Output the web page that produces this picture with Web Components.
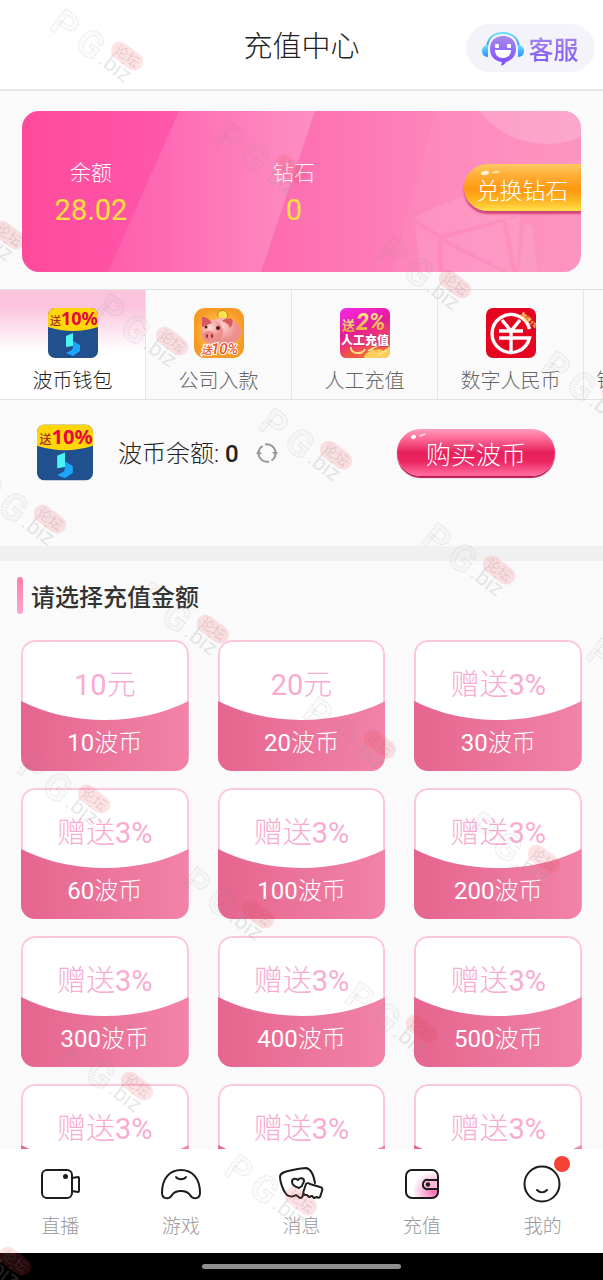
<!DOCTYPE html>
<html lang="zh-CN">
<head>
<meta charset="utf-8">
<meta name="viewport" content="width=device-width, initial-scale=1">
<title>充值中心</title>
<style>
  body {
    margin: 0;
    background: #fafafa;
    font-family: Roboto, "Noto Sans CJK SC", sans-serif;
    font-weight: 300;
    color: #333;
  }
</style>
</head>
<body>
<recharge-page></recharge-page>

<script>
// Icons, keyed by name
const ICONS = {
  service: `<svg viewBox="0 0 42 36">
    <defs>
      <linearGradient id="b" x1="0" y1="0" x2="0" y2="1"><stop offset="0" stop-color="#6be0fb"/><stop offset="1" stop-color="#2f8dfb"/></linearGradient>
      <linearGradient id="f" x1="0" y1="0" x2="0" y2="1"><stop offset="0" stop-color="#a78be8"/><stop offset="1" stop-color="#7c4bff"/></linearGradient>
    </defs>
    <path d="M5 17C6 7 13 3 21 3s15 4 16 14" fill="none" stroke="url(#b)" stroke-width="2"/>
    <path d="M6 15v12C2 27 0 24 0 21s2-6 6-6zM36 15v12c4 0 6-3 6-6s-2-6-6-6z" fill="url(#b)"/>
    <path d="M21 6c8 0 13 5 13 13 0 7-4 11-10 13-1 2-3 3-5 4l1-4C12 31 8 26 8 19 8 11 13 6 21 6z" fill="url(#f)"/>
    <rect x="13" y="14" width="4" height="4" rx="1" fill="#fff"/><rect x="25" y="14" width="4" height="4" rx="1" fill="#fff"/>
    <path d="M13 20h16c0 5-3 8-8 8s-8-3-8-8z" fill="#fff"/></svg>`,
  wallet: `<svg viewBox="0 0 50 50">
    <defs><clipPath id="r"><rect width="50" height="50" rx="7"/></clipPath></defs>
    <g clip-path="url(#r)"><rect width="50" height="50" fill="#21508f"/><path d="M0 0h50v19Q25 27 0 19z" fill="#ffd60a"/></g>
    <text x="2" y="17" font-size="11" font-weight="500" fill="#a3341a">送</text>
    <text x="13" y="17" font-family="Noto Sans, sans-serif" font-size="18" font-weight="700" fill="#e5083f">10%</text>
    <path d="M18 28l7-3v13l-7 1z" fill="#4bf3f2"/><path d="M25 33l7 4v6l-7 5-7-3 6-3 1-3z" fill="#1ba6fb"/></svg>`,
  pig: `<svg viewBox="0 0 50 50">
    <defs><radialGradient id="o"><stop offset="0" stop-color="#ffdf6a"/><stop offset="1" stop-color="#f79a25"/></radialGradient>
    <radialGradient id="p" cx=".4" cy=".3"><stop offset="0" stop-color="#ffdcd4"/><stop offset="1" stop-color="#ed8f8c"/></radialGradient></defs>
    <rect width="50" height="50" rx="11" fill="url(#o)"/>
    <path d="M24 9a5 5 0 1 1 8 2" fill="#ffe04c" stroke="#b7820e"/>
    <ellipse cx="29" cy="24" rx="18" ry="14" fill="url(#p)"/>
    <ellipse cx="18" cy="24" rx="11" ry="12" fill="url(#p)"/>
    <path d="M8 19l0-10c5 0 8 3 10 6zM28 13c3 1 7 3 8 7 3-3 3-7 2-9-4-1-8 0-10 2z" fill="#d9575e"/>
    <ellipse cx="15" cy="28" rx="6" ry="5" fill="#f08a86"/>
    <ellipse cx="13" cy="28" rx="1" ry="2" fill="#842b2b"/><ellipse cx="18" cy="28" rx="1" ry="2" fill="#842b2b"/>
    <circle cx="12" cy="19" r="1.5" fill="#472020"/><circle cx="24" cy="20" r="2" fill="#472020"/>
    <g fill="#e8542b" stroke="#fff" stroke-width="2" paint-order="stroke" font-weight="500" font-style="italic">
      <text x="7" y="46" font-size="11">送</text><text x="17" y="46" font-size="15">10%</text></g></svg>`,
  manual: `<svg viewBox="0 0 50 50">
    <defs><linearGradient id="m" x1="0" y1="0" x2=".4" y2="1"><stop offset="0" stop-color="#f32be8"/><stop offset=".5" stop-color="#e51b9b"/><stop offset="1" stop-color="#f9603e"/></linearGradient>
    <linearGradient id="y" x1="0" y1="0" x2="0" y2="1"><stop offset="0" stop-color="#fff19a"/><stop offset="1" stop-color="#e4a128"/></linearGradient>
    <clipPath id="r"><rect width="50" height="50" rx="6"/></clipPath></defs>
    <g clip-path="url(#r)"><rect width="50" height="50" fill="url(#m)"/>
      <path d="M24 50c1-7 5-4 8-9 3 3 7-2 11 2l7-5v12z" fill="#f9cf5b"/><path d="M2 50l9-10 8 10z" fill="#ed5843"/>
      <path d="M11 39a7 5 0 0 0 14 2M28 43l9-5M38 47l9-5" stroke="#ffe383" stroke-width="2" fill="none"/></g>
    <text x="2" y="22" font-size="13" font-weight="700" fill="url(#y)">送</text>
    <text x="16" y="22" font-size="23" font-weight="700" font-style="italic" fill="url(#y)">2%</text>
    <text x="25" y="37" text-anchor="middle" font-size="12" font-weight="900" fill="#fff" stroke="#c0207a" stroke-width="1" paint-order="stroke">人工充值</text></svg>`,
  ecny: `<svg viewBox="0 0 50 50">
    <rect width="50" height="50" rx="7" fill="#e40520"/>
    <g fill="none" stroke="#fff" stroke-width="3.4"><path d="M43.500 21A19 19 0 1 0 43.500 30H13M13 23h24M25 23v21M16 12l9 11 9-11"/></g>
    <text x="34" y="7" font-size="6" font-weight="900" fill="#ffd465" transform="rotate(42 34 7)">加送1%</text></svg>`,
  refresh: `<svg viewBox="0 0 24 24"><g fill="none" stroke="#999" stroke-width="2"><path d="M3.500 11a8.600 8.600 0 0 1 4-6M10 3.500a8.600 8.600 0 0 1 10.500 8M20.500 14a8.600 8.600 0 0 1-4 5.500M14 20.500a8.600 8.600 0 0 1-10.500-8"/></g>
    <path d="M1 13l2.500-4L7 13zM17 11h6l-2.500 4z" fill="#999"/></svg>`,
  live: `<svg viewBox="0 0 44 44"><g class="line"><rect x="4" y="7" width="30" height="28" rx="5"/><path d="M34 15l6-1q1 0 1 1v13q0 1-1 1l-6-1"/></g><circle cx="27.500" cy="13.500" r="2.500" fill="#1c1c1c"/></svg>`,
  game: `<svg viewBox="0 0 44 44"><g class="line"><path d="M22 7C33 7 41 15 41 30c0 6-7 7-10 2-2-3-5-4-9-4s-7 1-9 4c-3 5-10 4-10-2C3 15 11 7 22 7z"/><path d="M17 14c2 3 8 3 10 0"/></g></svg>`,
  message: `<svg viewBox="0 0 44 44"><g class="line">
    <path d="M24 31c0 2-1 4-3 4l-4-3c-3 2-8 2-10-1C4 27 1 19 1 14c0-4 4-5 8-6 6-1 12-3 18-3 6 1 8 9 9 15"/>
    <path d="M20 25c-3-1-7-3-7-6 0-4 4-4 6-2 2-3 6-2 6 1 0 2-2 3-2 5z"/>
    <path d="M27 21c1-1 3-1 4 0l10 3c2 0 3 2 2 4l-2 6c-1 1-2 1-3 0l-3 1-2-2-3 1-2-2-2 0c-2-1-2-3-1-5z"/></g></svg>`,
  recharge: `<svg viewBox="0 0 44 44"><defs><radialGradient id="g" cx=".9" cy=".75" r=".7"><stop offset=".1" stop-color="#fb77b9"/><stop offset="1" stop-color="#fff"/></radialGradient></defs>
    <rect x="6" y="7" width="32" height="28" rx="6" fill="url(#g)"/><g class="line"><rect x="6" y="7" width="32" height="28" rx="6"/><path d="M38 17H28a4 4 0 0 0-5 4.500 4 4 0 0 0 5 4.500h10z" style="fill:#fdb5d8"/></g><circle cx="28" cy="21.500" r="2.200" fill="#1c1c1c"/></svg>`,
  mine: `<svg viewBox="0 0 44 44"><g class="line"><circle cx="21" cy="21" r="17.500"/><path d="M16 27c3 3 7 3 10 0"/></g></svg>`
};

class UiIcon extends HTMLElement {
  constructor() {
    super();
    this.attachShadow({ mode: 'open' });
    this.shadowRoot.innerHTML = `
      <style>
        :host { display: block; flex: none; width: var(--icon-width, 50px); height: var(--icon-height, 50px); }
        svg { display: block; width: 100%; height: 100%; overflow: visible; }
        .line { fill: none; stroke: #1c1c1c; stroke-width: 2; stroke-linejoin: round; stroke-linecap: round; }
      </style>
      ${ICONS[this.getAttribute('name')] || ''}
    `;
  }
}

class PageHeader extends HTMLElement {
  constructor() {
    super();
    this.attachShadow({ mode: 'open' });
    this.shadowRoot.innerHTML = `
      <style>
        :host { display: block; flex: none; background: #fff; border-bottom: 2px solid #e8e8e8; }
        header { display: grid; grid-template-columns: 1fr auto 1fr; align-items: center; height: 89px; }
        h1 { margin: 4px 0 0; grid-column: 2; font-size: 29px; line-height: 40px; font-weight: 300; color: #222; }
        button {
          --icon-width: 42px; --icon-height: 36px;
          display: flex; align-items: center; justify-content: center; gap: 4px; justify-self: end;
          width: 129px; height: 48px; margin: 6px 8px 0 0; padding: 0;
          border: 0; border-radius: 24px; background: #f5f3fa;
          font: inherit; font-size: 25px; font-weight: 500;
        }
        span { color: transparent; background: linear-gradient(#ad8fec, #7d55fa); -webkit-background-clip: text; background-clip: text; }
      </style>
      <header>
        <h1><slot></slot></h1>
        <button type="button"><ui-icon name="service"></ui-icon><span>客服</span></button>
      </header>
    `;
  }
}

class BalanceCard extends HTMLElement {
  constructor() {
    super();
    this.attachShadow({ mode: 'open' });
    this.shadowRoot.innerHTML = `
      <style>
        :host { display: block; padding: 20px 22px 17px; }
        section {
          position: relative; overflow: hidden; height: 161px; border-radius: 17px;
          display: grid; grid-template-columns: 138fr 268fr 153fr; align-items: center;
          background: linear-gradient(90deg, #ff4a9c, #fe56aa 25%, #fd6cb0 45%, #fd86ba 75%, #fc91bd);
        }
        .art { position: absolute; inset: 0; width: 100%; height: 100%; }
        dl { position: relative; margin: 0; text-align: center; line-height: 37px; }
        dt { font-size: 21px; color: #fff; }
        dd { margin: 0; font-size: 29px; font-weight: 400; color: #ffe13b; }
        button {
          position: relative; justify-self: end; width: 117px; height: 47px; margin: 0 0 8px; padding: 2px 0 0;
          border: 0; border-radius: 24px 0 0 24px; color: #fff; font: inherit; font-size: 23px; white-space: nowrap;
          background: linear-gradient(#ffc965, #ffad35 25%, #ff9811 55%, #ffb622 78%, #ffe04d);
          box-shadow: 0 3px 2px #d34478;
        }
        button::before, button::after { content: ""; position: absolute; top: 7px; left: 17px; width: 8px; height: 4px; border-radius: 50%; background: #fff3d8; transform: rotate(-12deg); }
        button::after { top: 7px; left: 28px; height: 2px; opacity: .7; }
      </style>
      <section>
        <svg class="art" viewBox="0 0 559 161" preserveAspectRatio="none" aria-hidden="true">
          <defs><linearGradient id="s"><stop offset="0" stop-color="#fff" stop-opacity=".08"/><stop offset="1" stop-color="#fff" stop-opacity=".2"/></linearGradient></defs>
          <path d="M157 0h136l-54 161H86z" fill="url(#s)"/>
          <path d="M414 0h145v161H370z" fill="#fff" opacity=".04"/>
          <circle cx="525" cy="-53" r="86" fill="#fff" opacity=".17"/>
          <path d="M391 106l52-22 60 18-85 22zM393 112l23 15v34h-18zM422 128l58-17 10 50h-4zM421 132l60 29h-60zM484 109l14-4-3 56zM503 112l8 4 4 45h-18z" fill="#fff" opacity=".09"/>
        </svg>
        <dl><dt>余额</dt><dd>28.02</dd></dl>
        <dl><dt>钻石</dt><dd>0</dd></dl>
        <button type="button">兑换钻石</button>
      </section>
    `;
  }
}

class PayTab extends HTMLElement {
  constructor() {
    super();
    this.attachShadow({ mode: 'open' });
    this.shadowRoot.innerHTML = `
      <style>
        :host { display: block; box-sizing: border-box; flex: none; width: 146px; border-right: 1px solid #e6e6e6; }
        button {
          display: flex; flex-direction: column; align-items: center; gap: 10px;
          width: 100%; height: 109px; margin: 0; padding: 18px 0 0; border: 0; background: none;
          font: inherit; font-size: 20px; line-height: 26px; white-space: nowrap; color: #666;
        }
        :host([active]) button { color: #222; background: linear-gradient(#fbc3dc 15%, #fff 55%); }
      </style>
      <button type="button"><ui-icon name="${this.getAttribute('icon')}"></ui-icon><slot></slot></button>
    `;
  }
}

class PayTabs extends HTMLElement {
  constructor() {
    super();
    this.attachShadow({ mode: 'open' });
    this.shadowRoot.innerHTML = `
      <style>
        :host { display: flex; overflow: hidden; border: solid #e2e2e2; border-width: 1px 0; }
      </style>
      <slot></slot>
    `;
  }
}

class WalletBar extends HTMLElement {
  constructor() {
    super();
    this.attachShadow({ mode: 'open' });
    this.shadowRoot.innerHTML = `
      <style>
        :host { display: block; border-bottom: 15px solid #f0f0f0; }
        div { display: flex; align-items: center; padding: 24px 48px 65px 37px; --icon-width: 56px; --icon-height: 57px; }
        p { margin: 2px 16px 0 25px; font-size: 24px; line-height: 32px; color: #222; }
        b { font-weight: 500; }
        button { border: 0; padding: 0; font: inherit; }
        .refresh { --icon-width: 24px; --icon-height: 24px; background: none; }
        .buy {
          position: relative; width: 158px; height: 47px; margin-left: auto; border-radius: 24px; color: #fff; font-size: 25px;
          background: linear-gradient(#ff9dbc, #fb6793 22%, #e7215d 50%, #e9245f 68%, #fe6399 95%);
          box-shadow: 0 2px 1px #bd1749;
        }
        .buy::before, .buy::after { content: ""; position: absolute; top: 6px; left: 14px; width: 5px; height: 4px; border-radius: 50%; background: #fff; transform: rotate(-20deg); }
        .buy::after { top: 5px; left: 22px; width: 7px; height: 2px; opacity: .7; }
      </style>
      <div>
        <ui-icon name="wallet"></ui-icon>
        <p>波币余额: <b>0</b></p>
        <button class="refresh" type="button" aria-label="刷新"><ui-icon name="refresh"></ui-icon></button>
        <button class="buy" type="button">购买波币</button>
      </div>
    `;
  }
}

class AmountCard extends HTMLElement {
  constructor() {
    super();
    this.attachShadow({ mode: 'open' });
    this.shadowRoot.innerHTML = `
      <style>
        :host { display: block; }
        button {
          position: relative; display: flex; flex-direction: column; align-items: center; gap: 23px; overflow: hidden;
          width: 100%; height: 131px; margin: 0; padding: 26px 0 0; border: 0; border-radius: 14px; background: #fff; font: inherit;
        }
        button::before { content: ""; position: absolute; inset: 0; border: 2px solid #fcc6de; border-radius: 14px; }
        svg { position: absolute; inset: 0; width: 100%; height: 100%; }
        b, ::slotted(b) { font-weight: 400; }
        .top, .coin { position: relative; }
        .top { font-size: 29px; line-height: 38px; color: #f9acd2; }
        .coin { font-size: 24px; line-height: 32px; color: #fff; }
      </style>
      <button type="button">
        <svg viewBox="0 0 168 131" preserveAspectRatio="none" aria-hidden="true">
          <defs><linearGradient id="c"><stop offset="0" stop-color="#e5658e"/><stop offset="1" stop-color="#f283a8"/></linearGradient></defs>
          <path d="M0 61Q38 80 84 80T168 61V131H0z" fill="url(#c)"/>
        </svg>
        <span class="top"><slot></slot></span>
        <span class="coin"><b>${this.getAttribute('coins')}</b>波币</span>
      </button>
    `;
  }
}

class AmountPicker extends HTMLElement {
  constructor() {
    super();
    this.attachShadow({ mode: 'open' });
    this.shadowRoot.innerHTML = `
      <style>
        :host { display: block; }
        h2 { display: flex; align-items: center; gap: 8px; margin: 16px 17px 26px; font-size: 24px; line-height: 32px; font-weight: 500; color: #333; }
        h2::before { content: ""; width: 6px; height: 37px; border-radius: 3px; background: linear-gradient(#fd7fac, #fda5cf); }
        span { padding-top: 5px; }
        div { display: grid; grid-template-columns: repeat(3, 1fr); gap: 17px 29px; padding: 0 21px 17px; }
      </style>
      <h2><span>请选择充值金额</span></h2>
      <div><slot></slot></div>
    `;
  }
}

class NavItem extends HTMLElement {
  constructor() {
    super();
    this.attachShadow({ mode: 'open' });
    this.shadowRoot.innerHTML = `
      <style>
        :host { display: block; flex: 1; --icon-width: 44px; --icon-height: 44px; }
        a { display: flex; flex-direction: column; align-items: center; gap: 7px; padding-top: 14px; font-size: 19px; line-height: 26px; color: #999; text-decoration: none; }
        .icon { position: relative; }
        :host([dot]) .icon::after { content: ""; position: absolute; top: -7px; right: -5px; width: 16px; height: 16px; border-radius: 50%; background: #f44336; }
      </style>
      <a href="#"><span class="icon"><ui-icon name="${this.getAttribute('icon')}"></ui-icon></span><slot></slot></a>
    `;
  }
}

class BottomNav extends HTMLElement {
  constructor() {
    super();
    this.attachShadow({ mode: 'open' });
    this.shadowRoot.innerHTML = `
      <style>
        :host { display: block; flex: none; background: #fff; }
        nav { display: flex; height: 104px; }
        .system { display: flex; justify-content: center; align-items: center; height: 27px; background: #000; }
        .system::before { content: ""; width: 33%; height: 5px; border-radius: 3px; background: #8e8e8e; }
      </style>
      <nav><slot></slot></nav>
      <div class="system"></div>
    `;
  }
}

// Repeating stamp laid over the whole screen
class WaterMark extends HTMLElement {
  constructor() {
    super();
    this.attachShadow({ mode: 'open' });
    const spots = [
      [48, 28], [212, 141], [376, 256], [539, 370],
      [-70, 207], [93, 313], [257, 427], [420, 542], [584, 657],
      [-29, 491], [134, 601], [301, 716], [465, 831],
      [15, 771], [179, 886], [343, 1001], [58, 1058], [222, 1173], [-64, 1233]
    ];
    this.shadowRoot.innerHTML = `
      <style>
        :host { display: block; position: absolute; inset: 0; overflow: hidden; pointer-events: none; }
        svg { display: block; width: 100%; height: 100%; }
        .letters { font: 700 37px Roboto, sans-serif; fill: rgba(150, 150, 150, .03); stroke: rgba(130, 130, 130, .22); stroke-width: 1; stroke-dasharray: 2 1; }
        .biz { font: 400 22px Roboto, sans-serif; fill: rgba(150, 150, 150, .24); }
        .forum { font: 400 14px "Noto Sans CJK SC", sans-serif; fill: rgba(140, 110, 110, .22); }
      </style>
      <svg aria-hidden="true">
        ${spots.map(([x, y]) => `
          <g transform="translate(${x} ${y}) rotate(37)">
            <text class="letters" x="0" y="0">P</text>
            <text class="letters" x="31" y="0">G</text>
            <text class="biz" x="60" y="-2">.biz</text>
            <rect x="62" y="-34" width="36" height="18" rx="9" fill="rgba(240, 70, 80, .15)"/>
            <text class="forum" x="66" y="-20">论坛</text>
          </g>`).join('')}
      </svg>
    `;
  }
}

class RechargePage extends HTMLElement {
  constructor() {
    super();
    this.attachShadow({ mode: 'open' });
    const bonus = '赠送<b>3%</b>';
    const amounts = [
      [10, '<b>10</b>元'], [20, '<b>20</b>元'], [30, bonus], [60, bonus], [100, bonus], [200, bonus],
      [300, bonus], [400, bonus], [500, bonus], [600, bonus], [800, bonus], [1000, bonus]
    ];
    this.shadowRoot.innerHTML = `
      <style>
        :host { position: relative; display: flex; flex-direction: column; height: 100vh; overflow: hidden; }
        main { flex: 1; min-height: 0; overflow-y: auto; scrollbar-width: none; }
      </style>
      <page-header>充值中心</page-header>
      <main>
        <balance-card></balance-card>
        <pay-tabs>
          <pay-tab icon="wallet" active>波币钱包</pay-tab>
          <pay-tab icon="pig">公司入款</pay-tab>
          <pay-tab icon="manual">人工充值</pay-tab>
          <pay-tab icon="ecny">数字人民币</pay-tab>
          <pay-tab icon="wallet">钱包转账充值</pay-tab>
        </pay-tabs>
        <wallet-bar></wallet-bar>
        <amount-picker>
          ${amounts.map(([coins, label]) => `<amount-card coins="${coins}">${label}</amount-card>`).join('')}
        </amount-picker>
      </main>
      <bottom-nav>
        <nav-item icon="live">直播</nav-item>
        <nav-item icon="game">游戏</nav-item>
        <nav-item icon="message">消息</nav-item>
        <nav-item icon="recharge">充值</nav-item>
        <nav-item icon="mine" dot>我的</nav-item>
      </bottom-nav>
      <water-mark></water-mark>
    `;
  }
}

customElements.define('ui-icon', UiIcon);
customElements.define('page-header', PageHeader);
customElements.define('balance-card', BalanceCard);
customElements.define('pay-tab', PayTab);
customElements.define('pay-tabs', PayTabs);
customElements.define('wallet-bar', WalletBar);
customElements.define('amount-card', AmountCard);
customElements.define('amount-picker', AmountPicker);
customElements.define('nav-item', NavItem);
customElements.define('bottom-nav', BottomNav);
customElements.define('water-mark', WaterMark);
customElements.define('recharge-page', RechargePage);
</script>
</body>
</html>
